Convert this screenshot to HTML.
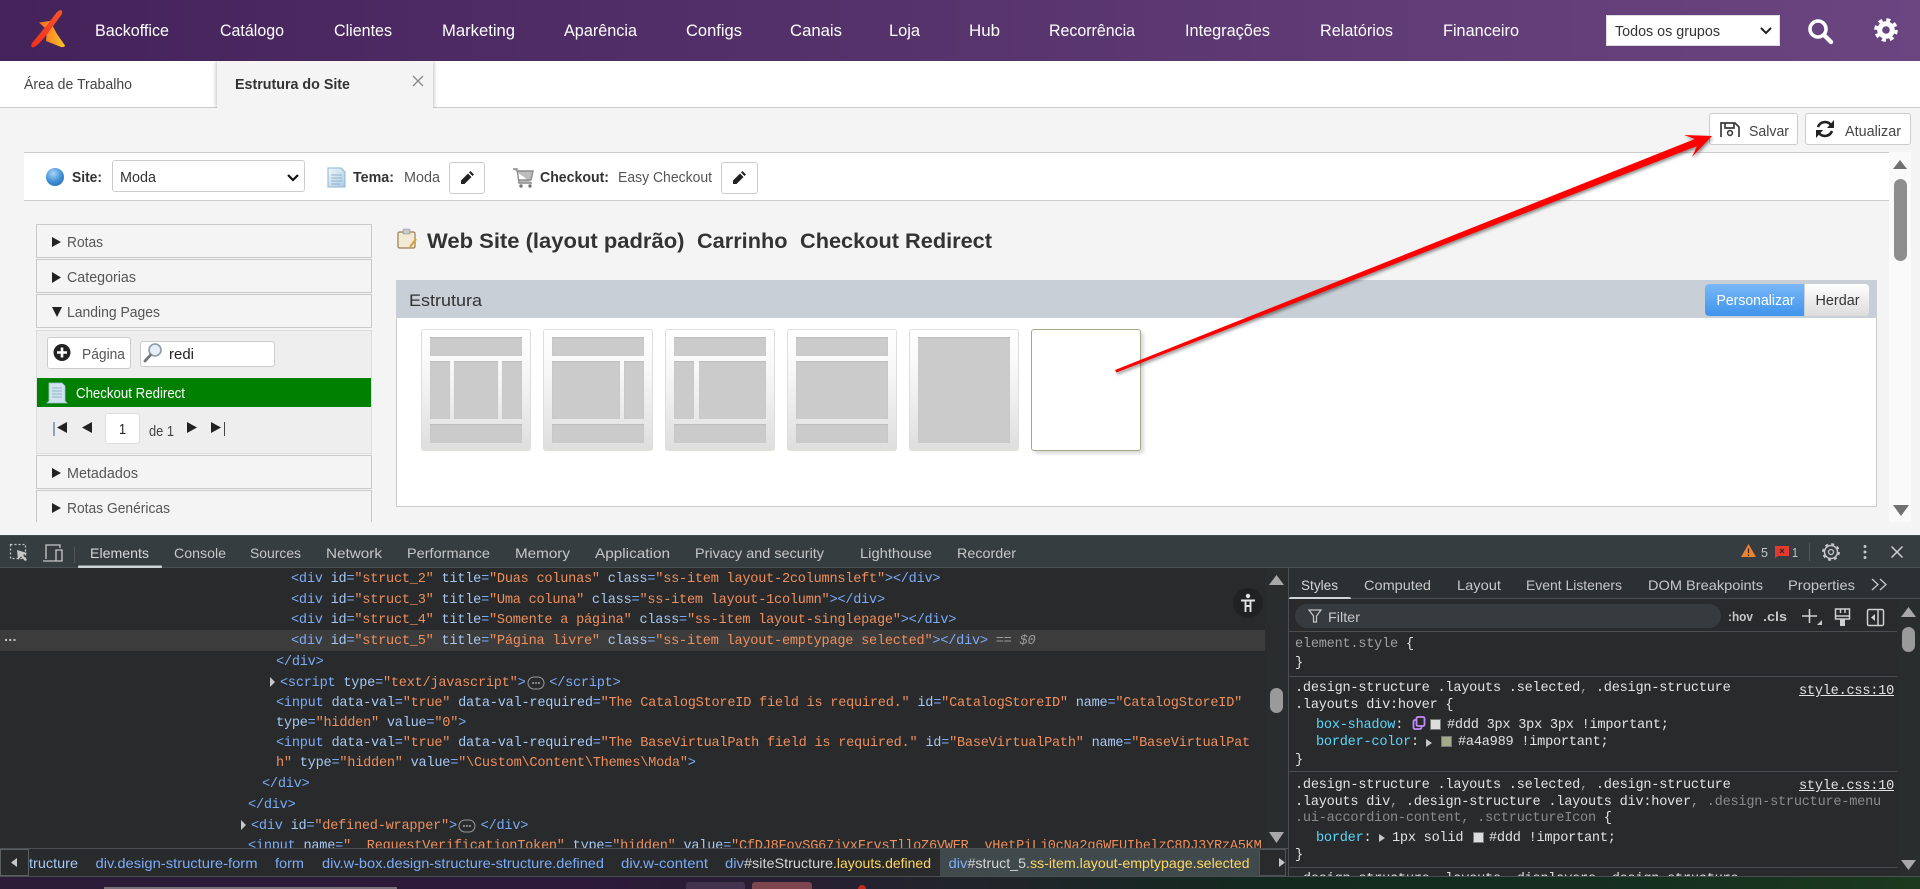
<!DOCTYPE html>
<html lang="pt-BR">
<head>
<meta charset="utf-8">
<title>Estrutura do Site</title>
<style>
html,body{margin:0;padding:0;width:1920px;height:889px;overflow:hidden;background:#f4f4f4;font-family:"Liberation Sans",sans-serif}
.b{position:absolute;box-sizing:border-box}
svg.o{position:absolute;left:0;top:0;z-index:5;pointer-events:none}
svg text{font-family:"Liberation Sans",sans-serif}
.acc{left:36px;width:336px;height:34px;background:#f4f4f4;border:1px solid #c9c9c9}
.th{top:329px;width:110px;height:122px;background:linear-gradient(#fff 0%,#f7f7f7 35%,#dedede 100%);border:1px solid #dedede;border-bottom-color:#dfe2d4;border-radius:3px}
.th i{position:absolute;background:#cbcbcb;box-shadow:inset 0 1px 1px #bdbdbd}
.c{position:absolute;white-space:pre;font:13.6px/20px "Liberation Mono",monospace;letter-spacing:-.24px;color:#e3e3e3;margin-top:1px}
.t{color:#7cacf8}.a{color:#a6c8f5}.v{color:#ee8f5e}.g{color:#9b9b9b}.p{color:#5cd5fb}
.sw{position:absolute;width:11px;height:11px;border:1px solid #777;box-sizing:border-box}
.sep{position:absolute;left:1289px;width:608px;height:1px;background:#4a4e50}
</style>
</head>
<body>

<!-- top nav -->
<div class="b" style="left:0;top:0;width:1920px;height:61px;background:linear-gradient(90deg,#44225a,#6b4580)"></div>
<div class="b" style="left:1606px;top:15px;width:174px;height:31px;background:#fff;border:1px solid #ddd"></div>

<!-- tabs -->
<div class="b" style="left:0;top:61px;width:1920px;height:47px;background:#fff;border-bottom:1px solid #ccc"></div>
<div class="b" style="left:217px;top:61px;width:216px;height:47px;background:#f4f4f4;box-shadow:0 0 5px rgba(0,0,0,.35);clip-path:inset(0 -8px 0 -8px)"></div>

<!-- buttons -->
<div class="b" style="left:1709px;top:113px;width:89px;height:32px;background:#fff;border:1px solid #ccc;border-radius:3px"></div>
<div class="b" style="left:1805px;top:113px;width:106px;height:32px;background:#fff;border:1px solid #ccc;border-radius:3px"></div>

<!-- site bar -->
<div class="b" style="left:24px;top:152px;width:1865px;height:49px;background:#fff;border-top:1px solid #ccc;border-bottom:1px solid #ccc"></div>
<div class="b" style="left:1889px;top:152px;width:22px;height:370px;background:#fafafa"></div>
<div class="b" style="left:1894px;top:179px;width:13px;height:82px;background:#8d8d8d;border-radius:7px"></div>
<div class="b" style="left:112px;top:160px;width:193px;height:32px;background:#fff;border:1px solid #ccc;border-radius:3px"></div>
<div class="b" style="left:449px;top:162px;width:36px;height:32px;background:#fff;border:1px solid #ccc;border-radius:3px"></div>
<div class="b" style="left:721px;top:162px;width:37px;height:32px;background:#fff;border:1px solid #ccc;border-radius:3px"></div>

<!-- sidebar -->
<div class="b acc" style="top:224px"></div>
<div class="b acc" style="top:259px"></div>
<div class="b acc" style="top:294px"></div>
<div class="b" style="left:36px;top:330px;width:336px;height:124px;background:#eee;border:1px solid #ddd"></div>
<div class="b" style="left:47px;top:337px;width:84px;height:32px;background:#fff;border:1px solid #ccc;border-radius:3px"></div>
<div class="b" style="left:140px;top:341px;width:135px;height:26px;background:#fff;border:1px solid #ccc;border-radius:3px"></div>
<div class="b" style="left:37px;top:378px;width:334px;height:29px;background:#008000"></div>
<div class="b" style="left:105px;top:413px;width:35px;height:31px;background:#fff;border:1px solid #ddd;border-radius:3px"></div>
<div class="b acc" style="top:455px"></div>
<div class="b acc" style="top:490px;height:32px;border-bottom:0"></div>

<!-- estrutura panel -->
<div class="b" style="left:396px;top:280px;width:1481px;height:227px;background:#fff;border:1px solid #ccc"></div>
<div class="b" style="left:396px;top:280px;width:1481px;height:38px;background:#c8cfd6"></div>
<div class="b" style="left:1705px;top:284px;width:99px;height:32px;background:linear-gradient(#7ab8f8,#3f94ec);border-radius:4px 0 0 4px"></div>
<div class="b" style="left:1805px;top:284px;width:64px;height:32px;background:linear-gradient(#fff,#dcdcdc);border-radius:0 4px 4px 0"></div>

<div class="b th" style="left:421px"><i style="left:8px;top:7px;width:92px;height:19px"></i><i style="left:8px;top:31px;width:20px;height:58px"></i><i style="left:32px;top:31px;width:44px;height:58px"></i><i style="left:80px;top:31px;width:20px;height:58px"></i><i style="left:8px;top:94px;width:92px;height:19px"></i></div>
<div class="b th" style="left:543px"><i style="left:8px;top:7px;width:92px;height:19px"></i><i style="left:8px;top:31px;width:68px;height:58px"></i><i style="left:80px;top:31px;width:20px;height:58px"></i><i style="left:8px;top:94px;width:92px;height:19px"></i></div>
<div class="b th" style="left:665px"><i style="left:8px;top:7px;width:92px;height:19px"></i><i style="left:8px;top:31px;width:20px;height:58px"></i><i style="left:33px;top:31px;width:67px;height:58px"></i><i style="left:8px;top:94px;width:92px;height:19px"></i></div>
<div class="b th" style="left:787px"><i style="left:8px;top:7px;width:92px;height:19px"></i><i style="left:8px;top:31px;width:92px;height:58px"></i><i style="left:8px;top:94px;width:92px;height:19px"></i></div>
<div class="b th" style="left:909px"><i style="left:8px;top:7px;width:92px;height:106px"></i></div>
<div class="b" style="left:1031px;top:329px;width:110px;height:122px;background:#fff;border:1px solid #a4a989;border-radius:3px;box-shadow:3px 3px 3px #ddd"></div>

<!-- devtools -->
<div class="b" style="left:0;top:535px;width:1920px;height:342px;background:#282a2b"></div>
<div class="b" style="left:0;top:535px;width:1920px;height:33px;background:#353d40;border-top:1px solid #454c4f;border-bottom:1px solid #4a5053"></div>

<!-- DOM panel -->
<div class="b" style="left:0;top:568px;width:1265px;height:280px;overflow:hidden">
  <div class="b" style="left:0;top:62px;width:1265px;height:21px;background:#3c3c3c"></div>
  <div class="c" style="left:291px;top:1px"><span class="t">&lt;div</span> <span class="a">id</span><span class="t">=</span><span class="v">"struct_2"</span> <span class="a">title</span><span class="t">=</span><span class="v">"Duas colunas"</span> <span class="a">class</span><span class="t">=</span><span class="v">"ss-item layout-2columnsleft"</span><span class="t">&gt;&lt;/div&gt;</span></div>
  <div class="c" style="left:291px;top:22px"><span class="t">&lt;div</span> <span class="a">id</span><span class="t">=</span><span class="v">"struct_3"</span> <span class="a">title</span><span class="t">=</span><span class="v">"Uma coluna"</span> <span class="a">class</span><span class="t">=</span><span class="v">"ss-item layout-1column"</span><span class="t">&gt;&lt;/div&gt;</span></div>
  <div class="c" style="left:291px;top:42px"><span class="t">&lt;div</span> <span class="a">id</span><span class="t">=</span><span class="v">"struct_4"</span> <span class="a">title</span><span class="t">=</span><span class="v">"Somente a página"</span> <span class="a">class</span><span class="t">=</span><span class="v">"ss-item layout-singlepage"</span><span class="t">&gt;&lt;/div&gt;</span></div>
  <div class="c" style="left:2px;top:60px;color:#c7c7c7;font-weight:bold;letter-spacing:-4px">...</div>
  <div class="c" style="left:291px;top:63px"><span class="t">&lt;div</span> <span class="a">id</span><span class="t">=</span><span class="v">"struct_5"</span> <span class="a">title</span><span class="t">=</span><span class="v">"Página livre"</span> <span class="a">class</span><span class="t">=</span><span class="v">"ss-item layout-emptypage selected"</span><span class="t">&gt;&lt;/div&gt;</span> <span class="g">== <i>$0</i></span></div>
  <div class="c" style="left:276px;top:84px"><span class="t">&lt;/div&gt;</span></div>
  <div class="c" style="left:280px;top:105px"><span class="t">&lt;script</span> <span class="a">type</span><span class="t">=</span><span class="v">"text/javascript"</span><span class="t">&gt;</span>   <span class="t">&lt;/script&gt;</span></div>
  <div class="c" style="left:276px;top:125px"><span class="t">&lt;input</span> <span class="a">data-val</span><span class="t">=</span><span class="v">"true"</span> <span class="a">data-val-required</span><span class="t">=</span><span class="v">"The CatalogStoreID field is required."</span> <span class="a">id</span><span class="t">=</span><span class="v">"CatalogStoreID"</span> <span class="a">name</span><span class="t">=</span><span class="v">"CatalogStoreID"</span></div>
  <div class="c" style="left:276px;top:145px"><span class="a">type</span><span class="t">=</span><span class="v">"hidden"</span> <span class="a">value</span><span class="t">=</span><span class="v">"0"</span><span class="t">&gt;</span></div>
  <div class="c" style="left:276px;top:165px"><span class="t">&lt;input</span> <span class="a">data-val</span><span class="t">=</span><span class="v">"true"</span> <span class="a">data-val-required</span><span class="t">=</span><span class="v">"The BaseVirtualPath field is required."</span> <span class="a">id</span><span class="t">=</span><span class="v">"BaseVirtualPath"</span> <span class="a">name</span><span class="t">=</span><span class="v">"BaseVirtualPat</span></div>
  <div class="c" style="left:276px;top:185px"><span class="v">h"</span> <span class="a">type</span><span class="t">=</span><span class="v">"hidden"</span> <span class="a">value</span><span class="t">=</span><span class="v">"\Custom\Content\Themes\Moda"</span><span class="t">&gt;</span></div>
  <div class="c" style="left:262px;top:206px"><span class="t">&lt;/div&gt;</span></div>
  <div class="c" style="left:248px;top:227px"><span class="t">&lt;/div&gt;</span></div>
  <div class="c" style="left:251px;top:248px"><span class="t">&lt;div</span> <span class="a">id</span><span class="t">=</span><span class="v">"defined-wrapper"</span><span class="t">&gt;</span>   <span class="t">&lt;/div&gt;</span></div>
  <div class="c" style="left:248px;top:268px"><span class="t">&lt;input</span> <span class="a">name</span><span class="t">=</span><span class="v">"__RequestVerificationToken"</span> <span class="a">type</span><span class="t">=</span><span class="v">"hidden"</span> <span class="a">value</span><span class="t">=</span><span class="v">"CfDJ8FoySG67jvxFrvsTlloZ6VWER__vHetPiLj0cNa2g6WFUIbelzC8DJ3YRzA5KM</span></div>
</div>
<div class="b" style="left:1265px;top:568px;width:23px;height:280px;background:#2a2d2e"></div>
<div class="b" style="left:1270px;top:688px;width:13px;height:25px;background:#9a9a9a;border-radius:7px"></div>
<div class="b" style="left:1233px;top:588px;width:30px;height:30px;background:#1f2122;border-radius:50%"></div>

<!-- breadcrumb -->
<div class="b" style="left:0;top:848px;width:1288px;height:29px;background:#282a2b;border-top:1px solid #4a5053"></div>
<div class="b" style="left:0;top:849px;width:29px;height:27px;border:1px solid #5b6063"></div>
<div class="b" style="left:940px;top:849px;width:319px;height:27px;background:#404a4d"></div>
<div class="b" style="left:1259px;top:849px;width:27px;height:27px;border:1px solid #4d5356"></div>

<!-- styles panel -->
<div class="b" style="left:1288px;top:568px;width:632px;height:308px;background:#282a2b;border-left:1px solid #4a5053;overflow:hidden">
  <div class="b" style="left:0;top:0;width:632px;height:31px;background:#2b3033;border-bottom:1px solid #4a5053"></div>
  <div class="b" style="left:0;top:29px;width:62px;height:2px;background:#cfd6da;border-radius:2px 2px 0 0"></div>
  <div class="c g" style="left:6px;top:66px;color:#a0a0a0">element.style <span style="color:#e3e3e3">{</span></div>
  <div class="c" style="left:6px;top:85px">}</div>
  <div class="c" style="left:6px;top:110px">.design-structure .layouts .selected<span class="g">,</span> .design-structure</div>
  <div class="c" style="left:6px;top:127px">.layouts div:hover {</div>
  <div class="c" style="left:27px;top:147px"><span class="p">box-shadow</span>:</div>
  <div class="c" style="left:158px;top:147px">#ddd 3px 3px 3px !important;</div>
  <div class="c" style="left:27px;top:164px"><span class="p">border-color</span>:</div>
  <div class="c" style="left:169px;top:164px">#a4a989 !important;</div>
  <div class="c" style="left:6px;top:182px">}</div>
  <div class="c" style="left:6px;top:207px">.design-structure .layouts .selected<span class="g">,</span> .design-structure</div>
  <div class="c" style="left:6px;top:224px">.layouts div<span class="g">,</span> .design-structure .layouts div:hover<span class="g">,</span> <span style="color:#8b8b8b">.design-structure-menu</span></div>
  <div class="c" style="left:6px;top:240px"><span style="color:#8b8b8b">.ui-accordion-content, .sctructureIcon</span> {</div>
  <div class="c" style="left:27px;top:260px"><span class="p">border</span>:</div>
  <div class="c" style="left:103px;top:260px">1px solid</div>
  <div class="c" style="left:200px;top:260px">#ddd !important;</div>
  <div class="c" style="left:6px;top:277px">}</div>
  <div class="c" style="left:6px;top:301px">.design-structure .layouts .displayers .design-structure</div>
  <div class="c" style="left:510px;top:113px;text-decoration:underline">style.css:10</div>
  <div class="c" style="left:510px;top:208px;text-decoration:underline">style.css:10</div>
</div>
<div class="sep" style="top:631px"></div>
<div class="sep" style="top:676px"></div>
<div class="sep" style="top:771px"></div>
<div class="sep" style="top:867px"></div>
<div class="b" style="left:1295px;top:604px;width:426px;height:24px;background:#353b3f;border-radius:12px"></div>
<div class="b" style="left:1897px;top:600px;width:23px;height:276px;background:#2a2d2e"></div>
<div class="b" style="left:1902px;top:627px;width:13px;height:25px;background:#9a9a9a;border-radius:7px"></div>
<div class="sw" style="left:1430px;top:719px;background:#ddd"></div>
<div class="sw" style="left:1441px;top:736px;background:#a4a989"></div>
<div class="sw" style="left:1473px;top:832px;background:#ddd"></div>

<!-- taskbar -->
<div class="b" style="left:0;top:876px;width:1920px;height:1px;background:#4a4f52"></div>
<div class="b" style="left:0;top:877px;width:1920px;height:12px;background:linear-gradient(90deg,#2c1c38 0%,#2d1a3a 30%,#22242c 50%,#14291f 65%,#152f20 85%,#1c3a1e 100%)"></div>
<div class="b" style="left:104px;top:887px;width:293px;height:2px;background:#77727c"></div>
<div class="b" style="left:686px;top:882px;width:59px;height:7px;background:#44334f;border-radius:3px 3px 0 0"></div>
<div class="b" style="left:752px;top:882px;width:60px;height:7px;background:#7d454d;border-radius:3px 3px 0 0"></div>
<div class="b" style="left:858px;top:885px;width:8px;height:4px;background:#c4281c;border-radius:4px 4px 0 0"></div>

<svg class="o" width="1920" height="889" viewBox="0 0 1920 889" xmlns="http://www.w3.org/2000/svg">
<defs>
<linearGradient id="lr" x1="0" y1="1" x2="1" y2="0"><stop offset="0" stop-color="#f2301e"/><stop offset="1" stop-color="#f5542a"/></linearGradient>
<linearGradient id="ly" x1="0" y1="0" x2="1" y2="0"><stop offset="0" stop-color="#f76a20"/><stop offset="1" stop-color="#f9c52a"/></linearGradient>
<radialGradient id="gl" cx=".4" cy=".3" r=".8"><stop offset="0" stop-color="#a8d4f4"/><stop offset=".6" stop-color="#3f8fd6"/><stop offset="1" stop-color="#2a6cb0"/></radialGradient>
<linearGradient id="pp" x1="0" y1="0" x2="1" y2="1"><stop offset="0" stop-color="#f2f7fb"/><stop offset="1" stop-color="#a9cbe6"/></linearGradient>
</defs>

<!-- logo -->
<path d="M39,22.5 L50,21 L57,34 L65,45.5 Q64.5,47.5 61,47 L46,41 L47,30 Z" fill="url(#ly)"/>
<path d="M60,10 Q63,10 62,14 L48,33 Q38,46 33,47.5 Q30,47 32,43 L47,25 L57,12 Z" fill="url(#lr)"/>

<!-- nav text -->
<g font-size="17" fill="#fff">
<text x="95" y="36" textLength="74" lengthAdjust="spacingAndGlyphs">Backoffice</text>
<text x="220" y="36" textLength="64" lengthAdjust="spacingAndGlyphs">Catálogo</text>
<text x="334" y="36" textLength="58" lengthAdjust="spacingAndGlyphs">Clientes</text>
<text x="442" y="36" textLength="73" lengthAdjust="spacingAndGlyphs">Marketing</text>
<text x="564" y="36" textLength="73" lengthAdjust="spacingAndGlyphs">Aparência</text>
<text x="686" y="36" textLength="56" lengthAdjust="spacingAndGlyphs">Configs</text>
<text x="790" y="36" textLength="52" lengthAdjust="spacingAndGlyphs">Canais</text>
<text x="889" y="36" textLength="31" lengthAdjust="spacingAndGlyphs">Loja</text>
<text x="969" y="36" textLength="31" lengthAdjust="spacingAndGlyphs">Hub</text>
<text x="1049" y="36" textLength="86" lengthAdjust="spacingAndGlyphs">Recorrência</text>
<text x="1185" y="36" textLength="85" lengthAdjust="spacingAndGlyphs">Integrações</text>
<text x="1320" y="36" textLength="73" lengthAdjust="spacingAndGlyphs">Relatórios</text>
<text x="1443" y="36" textLength="76" lengthAdjust="spacingAndGlyphs">Financeiro</text>
</g>
<text x="1615" y="36" font-size="15" fill="#333" textLength="105" lengthAdjust="spacingAndGlyphs">Todos os grupos</text>
<path d="M1761,28 L1766,33 L1771,28" fill="none" stroke="#222" stroke-width="2"/>
<circle cx="1818" cy="29" r="8" fill="none" stroke="#fff" stroke-width="3.6"/>
<path d="M1824,35 L1831,42" stroke="#fff" stroke-width="4.4" stroke-linecap="round"/>
<circle cx="1886" cy="30" r="6.3" fill="none" stroke="#fff" stroke-width="5"/>
<circle cx="1886" cy="30" r="10" fill="none" stroke="#fff" stroke-width="3.6" stroke-dasharray="4 3.85"/>

<!-- tabs text -->
<text x="24" y="89" font-size="15" fill="#444" textLength="108" lengthAdjust="spacingAndGlyphs">Área de Trabalho</text>
<text x="235" y="89" font-size="15" font-weight="bold" fill="#333" textLength="115" lengthAdjust="spacingAndGlyphs">Estrutura do Site</text>
<path d="M413,76 L423,86 M423,76 L413,86" stroke="#8a8a8a" stroke-width="1.3"/>

<!-- save / refresh -->
<path d="M1721,137 V123 H1735 L1739,127 V137 M1725,123 V128 H1734 V123" fill="none" stroke="#3c3c3c" stroke-width="1.7"/>
<circle cx="1730" cy="133" r="2.4" fill="none" stroke="#3c3c3c" stroke-width="1.6"/>
<text x="1749" y="136" font-size="15" fill="#444" textLength="40" lengthAdjust="spacingAndGlyphs">Salvar</text>
<path d="M1818,127 A7.5,7.5 0 0 1 1831,125 M1832,131 A7.5,7.5 0 0 1 1819,133" fill="none" stroke="#222" stroke-width="2.6"/>
<path d="M1834,120 V128 H1827 Z M1816,138 V130 H1823 Z" fill="#222"/>
<text x="1845" y="136" font-size="15" fill="#444" textLength="56" lengthAdjust="spacingAndGlyphs">Atualizar</text>

<!-- scrollbar arrows -->
<path d="M1900,160 L1907,169 H1893 Z" fill="#707070"/>
<path d="M1901,516 L1893,505 H1909 Z" fill="#707070"/>

<!-- site bar -->
<circle cx="55" cy="177" r="9" fill="url(#gl)"/>
<text x="72" y="182" font-size="15" font-weight="bold" fill="#333" textLength="30" lengthAdjust="spacingAndGlyphs">Site:</text>
<text x="120" y="182" font-size="15" fill="#333" textLength="36" lengthAdjust="spacingAndGlyphs">Moda</text>
<path d="M288,175 L293,180 L298,175" fill="none" stroke="#111" stroke-width="2.2"/>
<path d="M328,168 H341 L345,172 V187 H328 Z" fill="url(#pp)" stroke="#8fb3d1"/>
<path d="M331,175 H342 M331,178 H342 M331,181 H342 M331,184 H340" stroke="#7fa2bd" stroke-width=".8"/>
<text x="353" y="182" font-size="15" font-weight="bold" fill="#333" textLength="41" lengthAdjust="spacingAndGlyphs">Tema:</text>
<text x="404" y="182" font-size="15" fill="#555" textLength="36" lengthAdjust="spacingAndGlyphs">Moda</text>
<path d="M461,184 V180.500 L468,173.500 L471.500,177 L464.500,184 Z M469,172.500 L470.500,171 L474,174.500 L472.500,176 Z" fill="#222"/>
<path d="M513,169 L517,169 L519,183 H532 M518,171 H533 L531,180 H519" fill="#bcbcbc" stroke="#8c8c8c" stroke-width="1.4"/>
<circle cx="521" cy="186" r="1.7" fill="#777"/><circle cx="530" cy="186" r="1.7" fill="#777"/>
<text x="540" y="182" font-size="15" font-weight="bold" fill="#333" textLength="69" lengthAdjust="spacingAndGlyphs">Checkout:</text>
<text x="618" y="182" font-size="15" fill="#555" textLength="94" lengthAdjust="spacingAndGlyphs">Easy Checkout</text>
<path d="M733,184 V180.500 L740,173.500 L743.500,177 L736.500,184 Z M741,172.500 L742.500,171 L746,174.500 L744.500,176 Z" fill="#222"/>

<!-- sidebar text -->
<g font-size="15" fill="#555">
<text x="67" y="247" textLength="36" lengthAdjust="spacingAndGlyphs">Rotas</text>
<text x="67" y="282" textLength="69" lengthAdjust="spacingAndGlyphs">Categorias</text>
<text x="67" y="317" textLength="93" lengthAdjust="spacingAndGlyphs">Landing Pages</text>
<text x="67" y="478" textLength="71" lengthAdjust="spacingAndGlyphs">Metadados</text>
<text x="67" y="513" textLength="103" lengthAdjust="spacingAndGlyphs">Rotas Genéricas</text>
<text x="82" y="359" textLength="43" lengthAdjust="spacingAndGlyphs">Página</text>
</g>
<g fill="#222">
<path d="M52,237 L61,242 L52,247 Z"/><path d="M52,272 L61,277.5 L52,283 Z"/>
<path d="M52,307 H62 L57,317 Z"/><path d="M52,468 L61,473 L52,478 Z"/><path d="M52,503 L61,508 L52,513 Z"/>
</g>
<circle cx="62" cy="352.500" r="8.500" fill="#222"/>
<path d="M62,347.500 V357.500 M57,352.500 H67" stroke="#fff" stroke-width="2.600"/>
<circle cx="155" cy="350" r="6" fill="#e6eef6" stroke="#8a9aa8" stroke-width="1.600"/>
<path d="M150.500,355 L145,361" stroke="#777" stroke-width="2.800" stroke-linecap="round"/>
<text x="169" y="359" font-size="15" fill="#222" textLength="25" lengthAdjust="spacingAndGlyphs">redi</text>
<path d="M49,383 H62 L65,386 V401 L67,403 H47 L49,401 Z" fill="#cfe2ee" stroke="#9fc0d4" stroke-width=".8"/>
<path d="M52,388 H62 M52,391 H62 M52,394 H62 M52,397 H62" stroke="#7fa6bd" stroke-width=".8"/>
<text x="76" y="398" font-size="15" fill="#fff" textLength="109" lengthAdjust="spacingAndGlyphs">Checkout Redirect</text>
<path d="M54,422 V436" stroke="#2a5a8a" stroke-width="1"/>
<path d="M57,427.500 L67,422 V433 Z M82,427.500 L92,422 V433 Z M197,427.500 L187,422 V433 Z M221,427.500 L211,422 V433 Z" fill="#222"/>
<path d="M224.500,422 V436" stroke="#444" stroke-width="1"/>
<text x="119" y="434" font-size="15" fill="#222" textLength="7" lengthAdjust="spacingAndGlyphs">1</text>
<text x="149" y="436" font-size="15" fill="#444" textLength="25" lengthAdjust="spacingAndGlyphs">de 1</text>

<!-- title -->
<rect x="398" y="232" width="17" height="16" rx="1.500" fill="#f3ead6" stroke="#9a7c50" stroke-width="1.200"/>
<rect x="403" y="229" width="7" height="5" rx="1" fill="#c9c9c9" stroke="#888" stroke-width=".6"/>
<path d="M410,247 L416,239" stroke="#d8a030" stroke-width="2"/>
<g font-size="21" font-weight="bold" fill="#333">
<text x="427" y="248" textLength="257.500" lengthAdjust="spacingAndGlyphs">Web Site (layout padrão)</text>
<text x="697" y="248" textLength="90.500" lengthAdjust="spacingAndGlyphs">Carrinho</text>
<text x="800" y="248" textLength="192" lengthAdjust="spacingAndGlyphs">Checkout Redirect</text>
</g>
<text x="409" y="306" font-size="17" fill="#333" textLength="73" lengthAdjust="spacingAndGlyphs">Estrutura</text>
<text x="1716.500" y="305" font-size="15" fill="#fff" textLength="78" lengthAdjust="spacingAndGlyphs">Personalizar</text>
<text x="1815.500" y="305" font-size="15" fill="#333" textLength="44" lengthAdjust="spacingAndGlyphs">Herdar</text>

<!-- devtools toolbar -->
<g fill="none" stroke="#c7c7c7" stroke-width="1.300">
<rect x="10.500" y="544.500" width="15" height="14" stroke-dasharray="2 2"/>
<path d="M43,561 H58 M46,559 V545 H60 V548 M56,550 H62 V561 H56 Z"/>
</g>
<path d="M17,550 L27,553 L23,555 L27,560 L25,561 L21,556.500 L18,560 Z" fill="#c7c7c7"/>
<rect x="74" y="547" width="1" height="16" fill="#555"/>
<g font-size="14" fill="#c7c7c7">
<text x="90" y="558" textLength="59" lengthAdjust="spacingAndGlyphs" fill="#d6d6d6">Elements</text>
<text x="174" y="558" textLength="52" lengthAdjust="spacingAndGlyphs">Console</text>
<text x="250" y="558" textLength="51" lengthAdjust="spacingAndGlyphs">Sources</text>
<text x="326" y="558" textLength="56" lengthAdjust="spacingAndGlyphs">Network</text>
<text x="407" y="558" textLength="83" lengthAdjust="spacingAndGlyphs">Performance</text>
<text x="515" y="558" textLength="55" lengthAdjust="spacingAndGlyphs">Memory</text>
<text x="595" y="558" textLength="75" lengthAdjust="spacingAndGlyphs">Application</text>
<text x="695" y="558" textLength="129" lengthAdjust="spacingAndGlyphs">Privacy and security</text>
<text x="860" y="558" textLength="72" lengthAdjust="spacingAndGlyphs">Lighthouse</text>
<text x="957" y="558" textLength="59" lengthAdjust="spacingAndGlyphs">Recorder</text>
</g>
<rect x="78" y="565.500" width="84" height="2.500" rx="1" fill="#cfd6da"/>
<path d="M1748.500,544 L1756,557 H1741 Z" fill="#ee8230"/>
<path d="M1748.500,548.500 V553 M1748.500,554.500 V556" stroke="#2a2a2a" stroke-width="1.300"/>
<text x="1761" y="557" font-size="13" fill="#c7c7c7" textLength="7" lengthAdjust="spacingAndGlyphs">5</text>
<path d="M1775,546 H1789 V556 H1778 L1775,558 Z" fill="#e5392d"/>
<path d="M1780,549 L1784,553 M1784,549 L1780,553" stroke="#2a2a2a" stroke-width="1.200"/>
<text x="1792" y="557" font-size="13" fill="#c7c7c7" textLength="6" lengthAdjust="spacingAndGlyphs">1</text>
<rect x="1809" y="543" width="1" height="18" fill="#555"/>
<circle cx="1831" cy="552" r="6.500" fill="none" stroke="#c7c7c7" stroke-width="1.500"/>
<circle cx="1831" cy="552" r="8" fill="none" stroke="#c7c7c7" stroke-width="1.800" stroke-dasharray="3 3.280"/>
<circle cx="1831" cy="552" r="2.500" fill="none" stroke="#c7c7c7" stroke-width="1.300"/>
<g fill="#c7c7c7"><circle cx="1865" cy="546.500" r="1.500"/><circle cx="1865" cy="552" r="1.500"/><circle cx="1865" cy="557.500" r="1.500"/></g>
<path d="M1891.500,546.500 L1902.500,557.500 M1902.500,546.500 L1891.500,557.500" stroke="#d0d0d0" stroke-width="1.500"/>

<!-- DOM extras -->
<path d="M270,677 L275,682 L270,687 Z M241,820 L246,825 L241,830 Z" fill="#c7c7c7"/>
<g fill="#282a2b" stroke="#9a9a9a" stroke-width="1"><rect x="528" y="677" width="16" height="12" rx="6"/><rect x="459" y="820" width="16" height="12" rx="6"/></g>
<g fill="#c7c7c7"><circle cx="533" cy="683" r=".9"/><circle cx="536" cy="683" r=".9"/><circle cx="539" cy="683" r=".9"/><circle cx="464" cy="826" r=".9"/><circle cx="467" cy="826" r=".9"/><circle cx="470" cy="826" r=".9"/></g>
<path d="M1276.500,575 L1284,585 H1269 Z M1276.500,843 L1284,832 H1269 Z" fill="#a8a8a8"/>
<circle cx="1248" cy="596" r="2.200" fill="#e3e3e3"/>
<path d="M1241,600.500 H1255 M1245.500,600 V612 M1250.500,600 V612 M1245.500,606 H1250.500" stroke="#e3e3e3" stroke-width="1.900"/>

<!-- breadcrumb -->
<path d="M17,858 L11,862.500 L17,867 Z M1279,858 L1285,862.500 L1279,867 Z" fill="#c7c7c7"/>
<g font-size="14">
<text x="29" y="868" fill="#a6c8f5" textLength="49" lengthAdjust="spacingAndGlyphs">tructure</text>
<text x="95.500" y="868" fill="#7cacf8" textLength="162" lengthAdjust="spacingAndGlyphs">div.design-structure-form</text>
<text x="275" y="868" fill="#7cacf8" textLength="29" lengthAdjust="spacingAndGlyphs">form</text>
<text x="322" y="868" fill="#7cacf8" textLength="282" lengthAdjust="spacingAndGlyphs">div.w-box.design-structure-structure.defined</text>
<text x="621" y="868" fill="#7cacf8" textLength="87" lengthAdjust="spacingAndGlyphs">div.w-content</text>
<text x="725" y="868" fill="#7cacf8" textLength="19" lengthAdjust="spacingAndGlyphs">div</text>
<text x="744" y="868" fill="#d6d6d6" textLength="89" lengthAdjust="spacingAndGlyphs">#siteStructure</text>
<text x="833" y="868" fill="#fdd663" textLength="98" lengthAdjust="spacingAndGlyphs">.layouts.defined</text>
<text x="948.500" y="868" fill="#7cacf8" textLength="19" lengthAdjust="spacingAndGlyphs">div</text>
<text x="967.500" y="868" fill="#d6d6d6" textLength="58.500" lengthAdjust="spacingAndGlyphs">#struct_5</text>
<text x="1026" y="868" fill="#fdd663" textLength="223.500" lengthAdjust="spacingAndGlyphs">.ss-item.layout-emptypage.selected</text>
</g>

<!-- styles tabs -->
<g font-size="14" fill="#c7c7c7">
<text x="1301" y="590" textLength="37" lengthAdjust="spacingAndGlyphs" fill="#d6d6d6">Styles</text>
<text x="1364" y="590" textLength="67" lengthAdjust="spacingAndGlyphs">Computed</text>
<text x="1457" y="590" textLength="44" lengthAdjust="spacingAndGlyphs">Layout</text>
<text x="1526" y="590" textLength="96" lengthAdjust="spacingAndGlyphs">Event Listeners</text>
<text x="1648" y="590" textLength="115" lengthAdjust="spacingAndGlyphs">DOM Breakpoints</text>
<text x="1788" y="590" textLength="67" lengthAdjust="spacingAndGlyphs">Properties</text>
</g>
<path d="M1872,579 L1878,584.500 L1872,590 M1880,579 L1886,584.500 L1880,590" fill="none" stroke="#c7c7c7" stroke-width="1.300"/>
<path d="M1309,610 H1321 L1316.500,616 V622 H1313.500 V616 Z" fill="none" stroke="#c7c7c7" stroke-width="1.200"/>
<text x="1328" y="622" font-size="14" fill="#c7c7c7" textLength="32" lengthAdjust="spacingAndGlyphs">Filter</text>
<text x="1728" y="621" font-size="13" font-weight="bold" fill="#c7c7c7" textLength="25" lengthAdjust="spacingAndGlyphs">:hov</text>
<text x="1763" y="621" font-size="13" font-weight="bold" fill="#c7c7c7" textLength="24" lengthAdjust="spacingAndGlyphs">.cls</text>
<path d="M1809.500,609 V623 M1802,616 H1817" stroke="#d0d0d0" stroke-width="1.600"/>
<path d="M1822,620 V625 H1817 Z" fill="#c7c7c7"/>
<path d="M1835.500,609 H1849.500 V619 H1835.500 Z M1835.500,616 H1849.500 M1840.500,609 V613 M1845,609 V613" fill="none" stroke="#d0d0d0" stroke-width="1.500"/>
<rect x="1840" y="619" width="5" height="7" fill="#d0d0d0"/>
<rect x="1867.500" y="609.500" width="16" height="16" rx="1.500" fill="none" stroke="#d0d0d0" stroke-width="1.500"/>
<path d="M1878,610 V625" stroke="#d0d0d0" stroke-width="1.500"/>
<path d="M1875,614 L1871,617.500 L1875,621 Z" fill="#d0d0d0"/>
<path d="M1908.500,607 L1916,617 H1901 Z M1908.500,870 L1916,860 H1901 Z" fill="#a8a8a8"/>

<!-- styles icons -->
<rect x="1413.500" y="720" width="8" height="9" rx="1.500" fill="none" stroke="#c58af9" stroke-width="1.800"/>
<rect x="1416.500" y="717" width="8" height="9" rx="1.500" fill="#282a2b" stroke="#c58af9" stroke-width="1.800"/>
<path d="M1426,739 L1432,743 L1426,747 Z M1379,834 L1385,838 L1379,842 Z" fill="#c7c7c7"/>

<!-- red annotation arrow -->
<g style="filter:drop-shadow(1.500px 2px 1.500px rgba(0,0,0,.45))">
<path d="M1115,370 L1695,139 L1684,135 L1712,136 L1692,157 L1697,146 L1116.500,372.500 Z" fill="#ff0000"/>
</g>
</svg>
</body>
</html>
